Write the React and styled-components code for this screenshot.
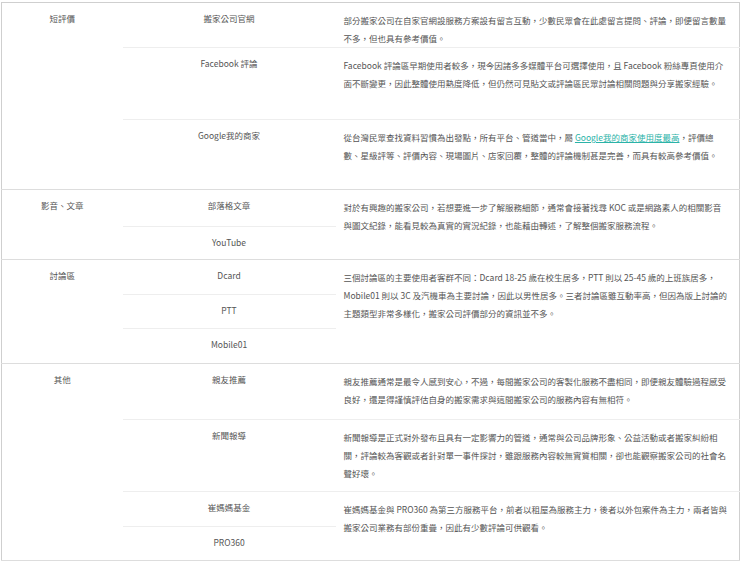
import React from 'react'
import styled, { createGlobalStyle } from 'styled-components';

const Global = createGlobalStyle`
  body { margin: 0; background: #fff; font-family: "Noto Sans CJK TC", "Liberation Sans", sans-serif; }
`;

const Wrap = styled.div`
  width: 740px;
  height: 562px;
  padding-top: 2px;
  box-sizing: border-box;
`;

const Table = styled.table`
  width: 739px;
  margin-left: 1px;
  border-collapse: collapse;
  table-layout: fixed;
  border: 1px solid #cfcfcf;
  font-size: 8.5px;
  color: #555;

  td { vertical-align: top; padding: 0; }
`;

const Cat = styled.td`
  text-align: center;
  padding-top: 9px !important;
  border-bottom: 1px solid #ddd;
`;

const Src = styled.td`
  text-align: center;
  padding-top: 9px !important;
  border-bottom: 1px solid ${p => (p.$last ? '#ddd' : '#eee')};
`;

const Desc = styled.td`
  padding: 8px 11px 0 8px !important;
  line-height: 18px;
  border-bottom: 1px solid ${p => (p.$last ? '#ddd' : '#eee')};
`;

const Row = styled.tr`
  height: ${p => p.$h}px;
`;

const Link = styled.a`
  color: #2bb3a8;
  text-decoration: underline;
`;

const App = () => (
  <Wrap>
    <Global />
    <Table>
      <colgroup>
        <col style={{ width: 121 }} />
        <col style={{ width: 213 }} />
        <col />
      </colgroup>
      <tbody>
        <Row $h={44}>
          <Cat rowSpan={3}>短評價</Cat>
          <Src>搬家公司官網</Src>
          <Desc>部分搬家公司在自家官網設服務方案設有留言互動，少數民眾會在此處留言提問、評論，即便留言數量不多，但也具有參考價值。</Desc>
        </Row>
        <Row $h={72}>
          <Src>Facebook 評論</Src>
          <Desc>Facebook 評論區早期使用者較多，現今因諸多多媒體平台可選擇使用，且 Facebook 粉絲專頁使用介面不斷變更，因此整體使用熱度降低，但仍然可見貼文或評論區民眾討論相關問題與分享搬家經驗。</Desc>
        </Row>
        <Row $h={70}>
          <Src $last>Google我的商家</Src>
          <Desc $last>從台灣民眾查找資料習慣為出發點，所有平台、管道當中，屬 <Link>Google我的商家使用度最高</Link>，評價總數、星級評等、評價內容、現場圖片、店家回覆，整體的評論機制甚是完善，而具有較高參考價值。</Desc>
        </Row>
        <Row $h={37}>
          <Cat rowSpan={2}>影音、文章</Cat>
          <Src>部落格文章</Src>
          <Desc rowSpan={2} $last>對於有興趣的搬家公司，若想要進一步了解服務細節，通常會接著找尋 KOC 或是網路素人的相關影音與圖文紀錄，能看見較為真實的實況紀錄，也能藉由轉述，了解整個搬家服務流程。</Desc>
        </Row>
        <Row $h={33}>
          <Src $last>YouTube</Src>
        </Row>
        <Row $h={35}>
          <Cat rowSpan={3}>討論區</Cat>
          <Src>Dcard</Src>
          <Desc rowSpan={3} $last>三個討論區的主要使用者客群不同：Dcard 18-25 歲在校生居多，PTT 則以 25-45 歲的上班族居多，Mobile01 則以 3C 及汽機車為主要討論，因此以男性居多。三者討論區雖互動率高，但因為版上討論的主題類型非常多樣化，搬家公司評價部分的資訊並不多。</Desc>
        </Row>
        <Row $h={34}>
          <Src>PTT</Src>
        </Row>
        <Row $h={35}>
          <Src $last>Mobile01</Src>
        </Row>
        <Row $h={56}>
          <Cat rowSpan={4}>其他</Cat>
          <Src>親友推薦</Src>
          <Desc>親友推薦通常是最令人感到安心，不過，每間搬家公司的客製化服務不盡相同，即便親友體驗過程感受良好，還是得謹慎評估自身的搬家需求與這間搬家公司的服務內容有無相符。</Desc>
        </Row>
        <Row $h={72}>
          <Src>新聞報導</Src>
          <Desc>新聞報導是正式對外發布且具有一定影響力的管道，通常與公司品牌形象、公益活動或者搬家糾紛相關，評論較為客觀或者針對單一事件探討，雖跟服務內容較無實質相關，卻也能觀察搬家公司的社會名聲好壞。</Desc>
        </Row>
        <Row $h={35}>
          <Src>崔媽媽基金</Src>
          <Desc rowSpan={2} $last>崔媽媽基金與 PRO360 為第三方服務平台，前者以租屋為服務主力，後者以外包案件為主力，兩者皆與搬家公司業務有部份重疊，因此有少數評論可供觀看。</Desc>
        </Row>
        <Row $h={34}>
          <Src $last>PRO360</Src>
        </Row>
      </tbody>
    </Table>
  </Wrap>
);

export default App;
